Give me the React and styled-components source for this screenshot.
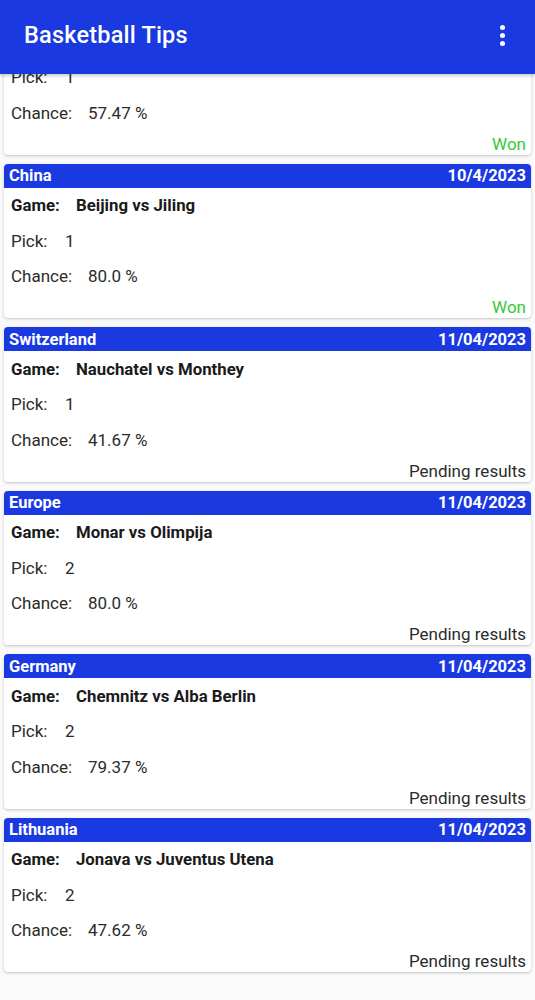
import React from 'react'
import styled, { createGlobalStyle } from 'styled-components'

const GlobalStyle = createGlobalStyle`
  html, body {
    margin: 0;
    padding: 0;
    background: #fafafa;
    font-family: Roboto, "Noto Sans", "Liberation Sans", sans-serif;
  }
`

const tips = [
  { country: 'Serbia', date: '10/4/2023', game: 'Partizan vs Mega', pick: '1', chance: '57.47 %', status: 'Won' },
  { country: 'China', date: '10/4/2023', game: 'Beijing vs Jiling', pick: '1', chance: '80.0 %', status: 'Won' },
  { country: 'Switzerland', date: '11/04/2023', game: 'Nauchatel vs Monthey', pick: '1', chance: '41.67 %', status: 'Pending results' },
  { country: 'Europe', date: '11/04/2023', game: 'Monar vs Olimpija', pick: '2', chance: '80.0 %', status: 'Pending results' },
  { country: 'Germany', date: '11/04/2023', game: 'Chemnitz vs Alba Berlin', pick: '2', chance: '79.37 %', status: 'Pending results' },
  { country: 'Lithuania', date: '11/04/2023', game: 'Jonava vs Juventus Utena', pick: '2', chance: '47.62 %', status: 'Pending results' },
]

function App() {
  return (
    <>
      <GlobalStyle />
      <Screen>
        <AppBar>
          <Title>Basketball Tips</Title>
          <MenuButton aria-label="menu">
            <Dot />
            <Dot />
            <Dot />
          </MenuButton>
        </AppBar>
        <List>
          {tips.map((tip, i) => (
            <Card key={i}>
              <CardHeader>
                <span>{tip.country}</span>
                <span>{tip.date}</span>
              </CardHeader>
              <Row $bold>
                <Label $width={65}>Game:</Label>
                <span>{tip.game}</span>
              </Row>
              <Row>
                <Label $width={54}>Pick:</Label>
                <span>{tip.pick}</span>
              </Row>
              <Row>
                <Label $width={77}>Chance:</Label>
                <span>{tip.chance}</span>
              </Row>
              <Status $won={tip.status === 'Won'}>{tip.status}</Status>
            </Card>
          ))}
        </List>
      </Screen>
    </>
  )
}

const Screen = styled.div`
  position: relative;
  width: 535px;
  height: 1000px;
  overflow: hidden;
`

const AppBar = styled.header`
  position: absolute;
  top: 0;
  left: 0;
  right: 0;
  height: 74px;
  background: #1a39e1;
  display: flex;
  align-items: center;
  justify-content: space-between;
  padding: 0 24px 4px 24px;
  box-sizing: border-box;
  box-shadow: 0 2px 3px rgba(0, 0, 0, 0.2);
  z-index: 2;
`

const Title = styled.h1`
  margin: 0;
  color: #fff;
  font-size: 23.5px;
  font-weight: 500;
  letter-spacing: 0.2px;
`

const MenuButton = styled.div`
  display: flex;
  flex-direction: column;
  align-items: center;
  gap: 3px;
  margin-right: 6px;
`

const Dot = styled.span`
  width: 5px;
  height: 5px;
  border-radius: 50%;
  background: #fff;
`

const List = styled.div`
  display: flex;
  flex-direction: column;
  gap: 9px;
  padding: 0 4px;
`

const Card = styled.div`
  background: #fff;
  border-radius: 4px;
  box-shadow: 0 1px 3px rgba(0, 0, 0, 0.22);
  height: 154.5px;
  display: flex;
  flex-direction: column;
  overflow: hidden;
`

const CardHeader = styled.div`
  height: 24px;
  background: #1a39e1;
  color: #fff;
  font-weight: 700;
  font-size: 16.5px;
  display: flex;
  align-items: center;
  justify-content: space-between;
  padding: 0 5px;
`

const Row = styled.div`
  height: 35.5px;
  display: flex;
  align-items: center;
  padding-left: 7px;
  font-size: ${p => (p.$bold ? '16.8px' : '17px')};
  color: ${p => (p.$bold ? '#1a1a1a' : '#2b2b2b')};
  font-weight: ${p => (p.$bold ? 700 : 400)};
  &:first-of-type {
    margin-top: 2px;
  }
`

const Label = styled.span`
  width: ${p => p.$width}px;
`

const Status = styled.div`
  margin-top: auto;
  height: 22px;
  display: flex;
  align-items: center;
  justify-content: flex-end;
  padding-right: 5px;
  font-size: 17px;
  color: ${p => (p.$won ? '#36c936' : '#2b2b2b')};
`

export default App
